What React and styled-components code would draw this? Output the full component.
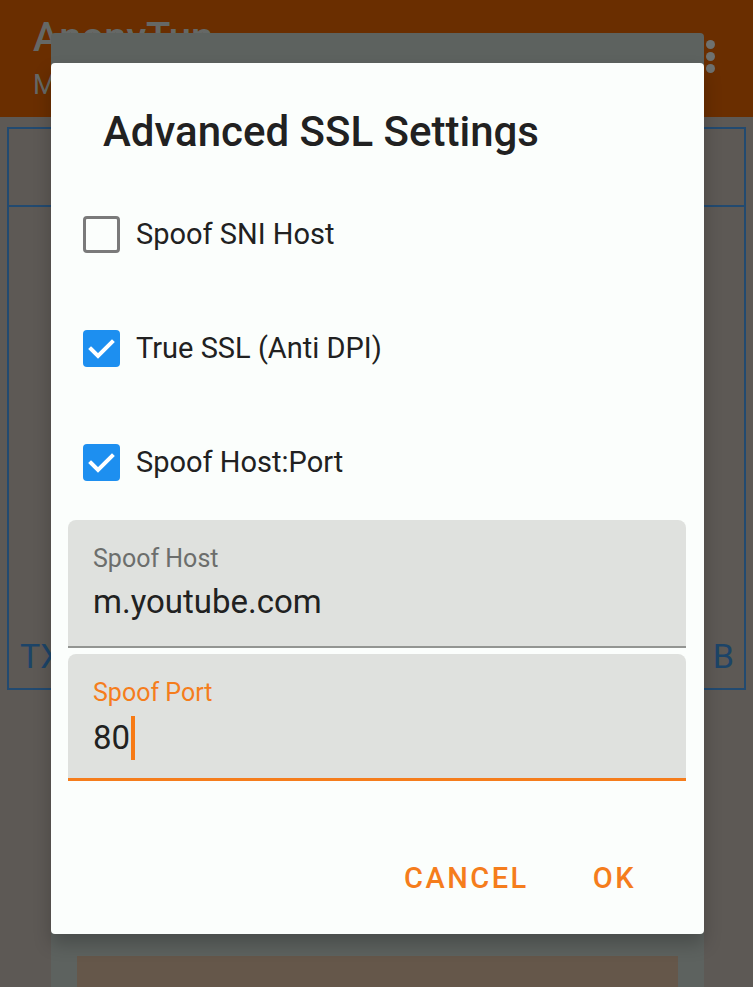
import React from "react";
import styled, { createGlobalStyle } from "styled-components";

const Global = createGlobalStyle`
  html, body { margin: 0; padding: 0; background: #5d5955; }
  body { font-family: Roboto, "Noto Sans", "Liberation Sans", sans-serif; }
  * { box-sizing: border-box; }
`;

const Screen = styled.div`
  position: relative;
  width: 753px;
  height: 987px;
  overflow: hidden;
  background: #5d5955;
  font-family: Roboto, "Liberation Sans", sans-serif;
`;

const Toolbar = styled.div`
  height: 117px;
  background: #6a2e00;
  padding: 14px 0 0 33px;
  display: flex;
  flex-direction: column;
  position: relative;
`;

const AppTitle = styled.div`
  font-size: 40px;
  line-height: 48px;
  font-weight: 500;
  color: #656866;
`;

const AppSub = styled.div`
  font-size: 27px;
  line-height: 34px;
  color: #656866;
  margin-top: 6px;
`;

const MenuDots = styled.div`
  position: absolute;
  right: 38px;
  top: 40px;
  display: flex;
  flex-direction: column;
  gap: 3px;
`;

const Dot = styled.span`
  width: 9px;
  height: 9px;
  border-radius: 50%;
  background: #6e716f;
`;

const Content = styled.div`
  padding: 10px 7px 0 7px;
`;

const Panel = styled.div`
  height: 563px;
  border: 2px solid #224a70;
  display: flex;
  flex-direction: column;
`;

const PanelHead = styled.div`
  height: 78px;
  border-bottom: 2px solid #224a70;
`;

const PanelBody = styled.div`
  flex: 1;
  display: flex;
  justify-content: space-between;
  align-items: flex-end;
  padding: 0 10px 12px 11px;
`;

const PanelText = styled.span`
  font-size: 34px;
  line-height: 40px;
  color: #1c4468;
`;

const BackDialog = styled.div`
  position: absolute;
  left: 51px;
  top: 33px;
  width: 653px;
  height: 1000px;
  background: #5d625f;
  border-radius: 4px;
  padding: 923px 26px 0 26px;
`;

const BackButton = styled.div`
  height: 80px;
  background: #65574a;
  display: flex;
  justify-content: center;
  padding-top: 25px;
  font-size: 29px;
  font-weight: 500;
  letter-spacing: 2.5px;
  color: #4c4a47;
`;

const Dialog = styled.div`
  position: absolute;
  left: 51px;
  top: 63px;
  width: 653px;
  height: 871px;
  background: #fbfefc;
  border-radius: 4px;
  box-shadow: 0 10px 18px rgba(0, 0, 0, 0.22);
  padding-top: 44px;
  display: flex;
  flex-direction: column;
`;

const Title = styled.div`
  font-size: 42px;
  line-height: 50px;
  font-weight: 500;
  color: #212121;
  padding-left: 52px;
  margin-bottom: 20px;
`;

const Row = styled.label`
  height: 114px;
  display: flex;
  align-items: center;
  padding-left: 32px;
  gap: 16px;
  font-size: 29px;
  line-height: 34px;
  color: #212121;
`;

const Box = styled.span`
  width: 37px;
  height: 37px;
  border-radius: 4px;
  flex-shrink: 0;
  display: flex;
  align-items: center;
  justify-content: center;
  background: ${(p) => (p.checked ? "#1d8ff0" : "transparent")};
  border: ${(p) => (p.checked ? "none" : "3px solid #7a7a7a")};
`;

const Field = styled.div`
  margin: ${(p) => (p.first ? "1px" : "6px")} 18px 0 17px;
  height: ${(p) => (p.focused ? "127px" : "128px")};
  background: #dfe1de;
  border-radius: 8px 8px 0 0;
  border-bottom: ${(p) => (p.focused ? "3px solid #f57d1c" : "2px solid #939592")};
  padding: 24px 25px 0 25px;
  display: flex;
  flex-direction: column;
  gap: 8px;
`;

const FieldLabel = styled.div`
  font-size: 25px;
  line-height: 30px;
  color: ${(p) => (p.focused ? "#f57d1c" : "#6c6e6c")};
`;

const FieldValue = styled.div`
  font-size: 33px;
  line-height: 40px;
  color: #212121;
  display: flex;
  align-items: center;
`;

const Cursor = styled.span`
  width: 4px;
  height: 44px;
  background: #f77a14;
  margin-left: 1px;
`;

const Actions = styled.div`
  margin-top: 80px;
  display: flex;
  justify-content: flex-end;
  gap: 64px;
  padding-right: 68px;
`;

const ActionButton = styled.span`
  font-size: 29px;
  line-height: 34px;
  font-weight: 500;
  letter-spacing: 2.5px;
  color: #f57d1c;
`;

const Check = () => (
  <svg width="37" height="37" viewBox="0 0 37 37">
    <polyline
      points="8,19 15,26 29,12"
      fill="none"
      stroke="#ffffff"
      strokeWidth="4"
      strokeLinecap="square"
    />
  </svg>
);

const CheckRow = ({ checked, children }) => (
  <Row>
    <Box checked={checked}>{checked && <Check />}</Box>
    {children}
  </Row>
);

export default function App() {
  return (
    <>
      <Global />
      <Screen>
        <Toolbar>
          <AppTitle>AnonyTun</AppTitle>
          <AppSub>Mode</AppSub>
          <MenuDots>
            <Dot />
            <Dot />
            <Dot />
          </MenuDots>
        </Toolbar>
        <Content>
          <Panel>
            <PanelHead />
            <PanelBody>
              <PanelText>TX</PanelText>
              <PanelText>B</PanelText>
            </PanelBody>
          </Panel>
        </Content>

        <BackDialog>
          <BackButton>EDIT CUSTOM TCP/HTTP HEADERS</BackButton>
        </BackDialog>

        <Dialog>
          <Title>Advanced SSL Settings</Title>
          <CheckRow checked={false}>Spoof SNI Host</CheckRow>
          <CheckRow checked>True SSL (Anti DPI)</CheckRow>
          <CheckRow checked>Spoof Host:Port</CheckRow>
          <Field first>
            <FieldLabel>Spoof Host</FieldLabel>
            <FieldValue>m.youtube.com</FieldValue>
          </Field>
          <Field focused>
            <FieldLabel focused>Spoof Port</FieldLabel>
            <FieldValue>
              80
              <Cursor />
            </FieldValue>
          </Field>
          <Actions>
            <ActionButton>CANCEL</ActionButton>
            <ActionButton>OK</ActionButton>
          </Actions>
        </Dialog>
      </Screen>
    </>
  );
}
